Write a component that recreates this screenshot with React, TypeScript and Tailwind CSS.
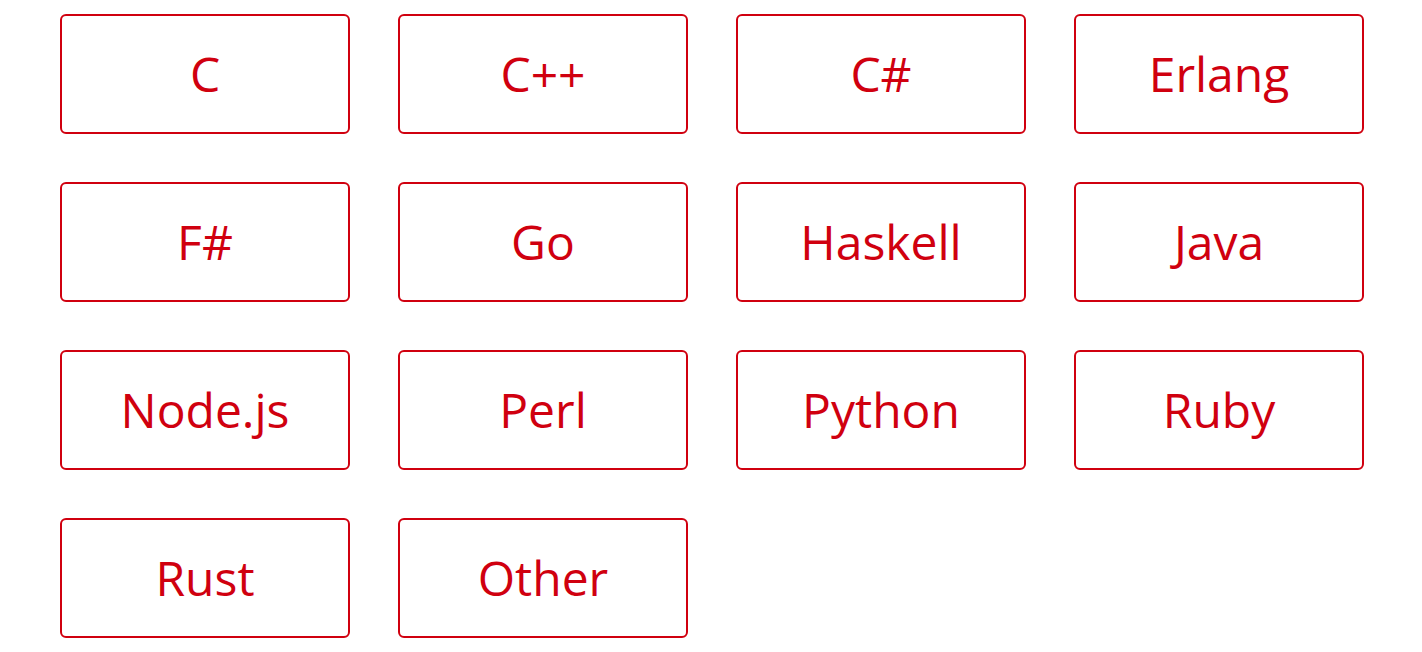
const languages = [
    'C',
    'C++',
    'C#',
    'Erlang',
    'F#',
    'Go',
    'Haskell',
    'Java',
    'Node.js',
    'Perl',
    'Python',
    'Ruby',
    'Rust',
    'Other',
];

export default function App() {
    return (
        <div className="min-h-[652px] bg-white pl-[60px] pt-[14px] font-['Open_Sans',sans-serif]">
            <div className="grid w-[1304px] grid-cols-4 gap-[48px]">
                {languages.map((lang) => (
                    <button
                        key={lang}
                        className="flex h-[120px] items-center justify-center rounded-[6px] border-2 border-[#d0000f] bg-white text-[48px] leading-none text-[#d0000f]"
                    >
                        {lang}
                    </button>
                ))}
            </div>
        </div>
    );
}
